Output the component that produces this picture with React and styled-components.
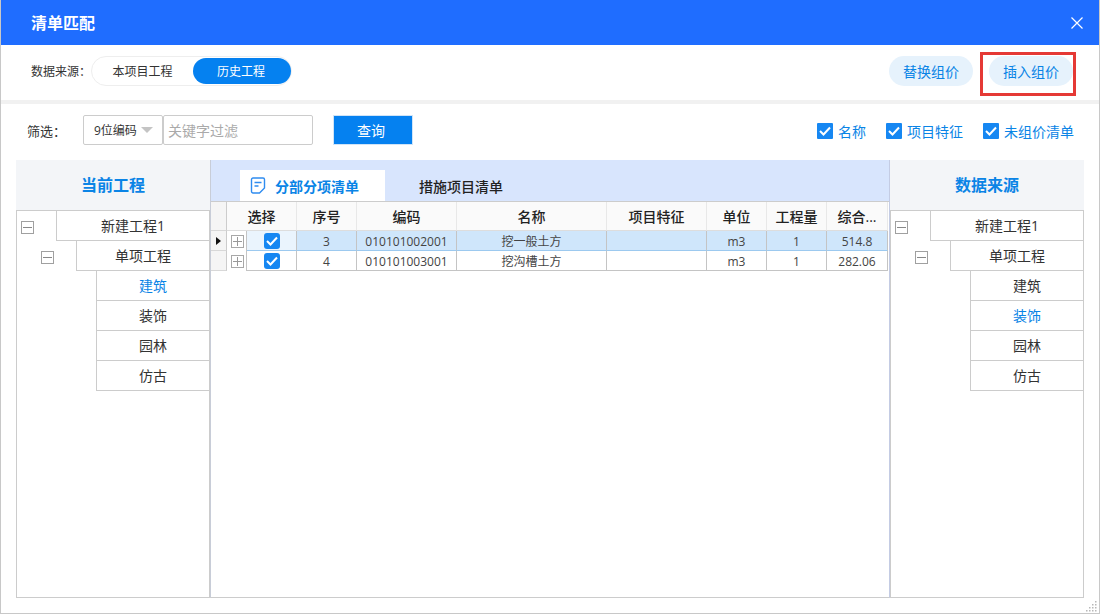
import React from "react";
import styled, { createGlobalStyle } from "styled-components";

const GlobalStyle = createGlobalStyle`
  html, body {
    margin: 0;
    padding: 0;
    background: #fff;
  }
  * {
    box-sizing: border-box;
  }
`;

const Dialog = styled.div`
  position: relative;
  display: flex;
  flex-direction: column;
  width: 1100px;
  height: 614px;
  overflow: hidden;
  background: #fff;
  border: 1px solid #c8c8c8;
  border-top: none;
  font-family: "Open Sans", "Noto Sans CJK SC", "Liberation Sans", sans-serif;
  font-size: 12px;
  color: #333;
`;

const TitleBar = styled.div`
  display: flex;
  align-items: center;
  justify-content: space-between;
  flex: none;
  height: 45px;
  margin: 0 -1px;
  padding: 0 17px 0 31px;
  background: #1f6dff;
  color: #fff;
`;

const Title = styled.h1`
  margin: 0;
  font-size: 16px;
  font-weight: 700;
  line-height: 22px;
`;

const CloseIcon = styled.svg`
  display: block;
  width: 12px;
  height: 12px;
`;

const Toolbar = styled.div`
  display: flex;
  align-items: center;
  justify-content: space-between;
  flex: none;
  height: 59px;
  padding: 0 26px 3px 30px;
  border-bottom: 4px solid #f1f1f1;
`;

const SourceGroup = styled.div`
  display: flex;
  align-items: center;
`;

const SourceLabel = styled.span`
  width: 60px;
  font-size: 12px;
`;

const Toggle = styled.div`
  display: flex;
  align-items: center;
  width: 201px;
  height: 30px;
  padding: 2px 0;
  border: 1px solid #eeeeee;
  border-radius: 15px;
`;

const ToggleOption = styled.div`
  display: flex;
  align-items: center;
  justify-content: center;
  width: ${(p) => (p.$active ? "98px" : "101px")};
  height: 26px;
  padding-right: ${(p) => (p.$active ? "2px" : "0")};
  border-radius: 13px;
  font-size: 12px;
  background: ${(p) => (p.$active ? "#0581f0" : "transparent")};
  color: ${(p) => (p.$active ? "#fff" : "#333")};
`;

const ActionGroup = styled.div`
  display: flex;
  gap: 16px;
`;

const ActionButton = styled.div`
  display: flex;
  align-items: center;
  justify-content: center;
  width: 84px;
  height: 30px;
  border-radius: 15px;
  background: #e6f2fc;
  color: #0a84e6;
  font-size: 14px;
`;

const Annotation = styled.div`
  position: absolute;
  left: 979px;
  top: 52px;
  width: 96px;
  height: 44px;
  border: 3px solid #e53935;
`;

const FilterBar = styled.div`
  display: flex;
  align-items: center;
  flex: none;
  height: 56px;
  padding: 0 25px 4px 26px;
`;

const FilterLabel = styled.span`
  width: 56px;
  font-size: 13px;
`;

const Select = styled.div`
  display: flex;
  align-items: center;
  width: 80px;
  height: 30px;
  padding-left: 10px;
  border: 1px solid #cccccc;
  border-radius: 2px;
  font-size: 12px;
`;

const Caret = styled.span`
  width: 0;
  height: 0;
  margin-left: 4px;
  border-left: 6px solid transparent;
  border-right: 6px solid transparent;
  border-top: 6px solid #c4c4c4;
`;

const KeywordInput = styled.input`
  width: 150px;
  height: 30px;
  padding: 0 4px;
  border: 1px solid #cccccc;
  border-radius: 2px;
  outline: none;
  font-family: inherit;
  font-size: 14px;
  &::placeholder {
    color: #aaaaaa;
  }
`;

const QueryButton = styled.button`
  width: 80px;
  height: 30px;
  margin-left: 20px;
  padding: 0 4px 0 0;
  border: 1px solid #d0e4f7;
  background: #0581f0;
  color: #fff;
  font-family: inherit;
  font-size: 14px;
`;

const CheckGroup = styled.div`
  display: flex;
  gap: 20px;
  margin-left: auto;
  margin-top: 2px;
`;

const CheckLabel = styled.label`
  display: flex;
  align-items: center;
  gap: 5px;
  color: #0a84e6;
  font-size: 14px;
`;

const CheckBox = styled.span`
  display: flex;
  align-items: center;
  justify-content: center;
  flex: none;
  width: 16px;
  height: 16px;
  border-radius: ${(p) => (p.$round ? "3px" : "1px")};
  background: #1687f2;
`;

const Main = styled.div`
  display: flex;
  flex: 1;
  min-height: 0;
  margin: 0 15px 15px;
`;

const SidePanel = styled.section`
  display: flex;
  flex-direction: column;
  width: 194px;
  flex: none;
`;

const SideHeader = styled.h2`
  display: flex;
  align-items: center;
  justify-content: center;
  flex: none;
  height: 50px;
  margin: 0;
  padding-bottom: 2px;
  background: #f3f5f8;
  color: #0a84e6;
  font-size: 16px;
  font-weight: 700;
`;

const Tree = styled.div`
  flex: 1;
  border: 1px solid #cccccc;
`;

const TreeRow = styled.div`
  display: flex;
  align-items: center;
  height: 30px;
`;

const Expander = styled.span`
  display: flex;
  align-items: center;
  justify-content: center;
  flex: none;
  width: 13px;
  height: 13px;
  margin: 2px 22px 0 ${(p) => p.$indent}px;
  border: 1px solid #a0a0a0;
`;

const TreeCell = styled.div`
  display: flex;
  align-items: center;
  justify-content: center;
  flex: 1;
  height: 30px;
  margin-left: ${(p) => p.$indent || 0}px;
  padding-bottom: 2px;
  border-left: 1px solid #cccccc;
  border-bottom: 1px solid #cccccc;
  color: ${(p) => (p.$active ? "#0a84e6" : "#333")};
  font-size: 14px;
`;

const Center = styled.section`
  display: flex;
  flex-direction: column;
  flex: 1;
  min-width: 0;
  border-left: 1px solid #c8cdd8;
  border-right: 1px solid #c4cce4;
  border-bottom: 1px solid #cccccc;
`;

const TabBar = styled.div`
  display: flex;
  align-items: flex-end;
  flex: none;
  height: 41px;
  padding-left: 29px;
  background: #d8e5fd;
`;

const Tab = styled.div`
  display: flex;
  align-items: center;
  gap: 9px;
  width: 145px;
  height: 31px;
  padding-left: 10px;
  background: #fff;
  color: #0a84e6;
  font-size: 14px;
  font-weight: 700;
`;

const PlainTab = styled.div`
  display: flex;
  align-items: center;
  height: 31px;
  margin-left: 34px;
  color: #222;
  font-size: 14px;
  font-weight: 500;
`;

const GridRow = styled.div`
  display: grid;
  grid-template-columns: 16px 20px 50px 60px 100px 150px 100px 60px 60px 61px;
  height: ${(p) => (p.$head ? "30px" : "20px")};
  border-top: ${(p) => (p.$head ? "1px solid #cccccc" : "none")};
`;

const HeadCell = styled.div`
  grid-column: ${(p) => (p.$wide ? "span 2" : "auto")};
  display: flex;
  align-items: center;
  justify-content: center;
  border-right: 1px solid #e8e8e8;
  border-bottom: 1px solid #dddddd;
  background: #fafafa;
  color: #222;
  font-size: 14px;
  font-weight: 500;
`;

const RowHead = styled.div`
  display: flex;
  align-items: center;
  justify-content: center;
  border-right: 1px solid #cccccc;
  border-bottom: 1px solid #d8d8d8;
  background: #f5f5f5;
`;

const ExpandCell = styled.div`
  display: flex;
  align-items: center;
  justify-content: center;
  padding-left: 1px;
  border-right: 1px solid #c4c4c4;
`;

const Cell = styled.div`
  display: flex;
  align-items: center;
  justify-content: center;
  padding-top: ${(p) => (p.$check ? "0" : "1px")};
  border-right: 1px solid #c4c4c4;
  border-bottom: 1px solid ${(p) => (p.$selected ? "#9cc9ef" : "#c4c4c4")};
  background: ${(p) => (p.$selected ? (p.$check ? "#eaf4fd" : "#cfe6fb") : "#fff")};
  color: #444;
  font-size: 12px;
`;

const SmallExpander = styled.span`
  display: flex;
  align-items: center;
  justify-content: center;
  width: 13px;
  height: 13px;
  border: 1px solid #a8a8a8;
`;

const Grip = styled.svg`
  position: absolute;
  right: 1px;
  bottom: 1px;
  width: 12px;
  height: 12px;
`;

const columns = ["序号", "编码", "名称", "项目特征", "单位", "工程量", "综合..."];

const rows = [
  { id: 3, code: "010101002001", name: "挖一般土方", unit: "m3", qty: "1", price: "514.8", selected: true },
  { id: 4, code: "010101003001", name: "挖沟槽土方", unit: "m3", qty: "1", price: "282.06" },
];

const Tick = () => (
  <svg width="12" height="10" viewBox="0 0 12 10" fill="none">
    <path d="M1 5l3.5 3.5L11 1.5" stroke="#fff" strokeWidth="2" />
  </svg>
);

const Minus = () => (
  <svg width="9" height="9" viewBox="0 0 9 9">
    <path d="M0 4.5h9" stroke="#888" strokeWidth="1" />
  </svg>
);

const Plus = () => (
  <svg width="9" height="9" viewBox="0 0 9 9">
    <path d="M0 4.5h9M4.5 0v9" stroke="#999" strokeWidth="1" />
  </svg>
);

const ProjectTree = ({ activeLeaf }) => (
  <Tree>
    <TreeRow>
      <Expander $indent={4}>
        <Minus />
      </Expander>
      <TreeCell>新建工程1</TreeCell>
    </TreeRow>
    <TreeRow>
      <Expander $indent={24}>
        <Minus />
      </Expander>
      <TreeCell>单项工程</TreeCell>
    </TreeRow>
    {["建筑", "装饰", "园林", "仿古"].map((leaf) => (
      <TreeRow key={leaf}>
        <TreeCell $indent={79} $active={leaf === activeLeaf}>
          {leaf}
        </TreeCell>
      </TreeRow>
    ))}
  </Tree>
);

const App = () => {
  return (
    <Dialog>
      <GlobalStyle />
      <TitleBar>
        <Title>清单匹配</Title>
        <CloseIcon viewBox="0 0 12 12" fill="none">
          <path d="M.5.5l11 11M11.5.5l-11 11" stroke="#fff" strokeWidth="1.2" />
        </CloseIcon>
      </TitleBar>

      <Toolbar>
        <SourceGroup>
          <SourceLabel>数据来源：</SourceLabel>
          <Toggle>
            <ToggleOption>本项目工程</ToggleOption>
            <ToggleOption $active>历史工程</ToggleOption>
          </Toggle>
        </SourceGroup>
        <ActionGroup>
          <ActionButton>替换组价</ActionButton>
          <ActionButton>插入组价</ActionButton>
        </ActionGroup>
      </Toolbar>
      <Annotation />

      <FilterBar>
        <FilterLabel>筛选：</FilterLabel>
        <Select>
          9位编码
          <Caret />
        </Select>
        <KeywordInput placeholder="关键字过滤" />
        <QueryButton>查询</QueryButton>
        <CheckGroup>
          {["名称", "项目特征", "未组价清单"].map((label) => (
            <CheckLabel key={label}>
              <CheckBox>
                <Tick />
              </CheckBox>
              {label}
            </CheckLabel>
          ))}
        </CheckGroup>
      </FilterBar>

      <Main>
        <SidePanel>
          <SideHeader>当前工程</SideHeader>
          <ProjectTree activeLeaf="建筑" />
        </SidePanel>

        <Center>
          <TabBar>
            <Tab>
              <svg width="16" height="17" viewBox="0 0 16 17" fill="none" stroke="#2f8cf0" strokeWidth="1.4">
                <path d="M3 1h10a1.5 1.5 0 0 1 1.5 1.5v8.5l-5 5H3A1.5 1.5 0 0 1 1.5 14.5v-12A1.5 1.5 0 0 1 3 1z" />
                <path d="M4.5 5.5h7M4.5 9h4" />
              </svg>
              分部分项清单
            </Tab>
            <PlainTab>措施项目清单</PlainTab>
          </TabBar>
          <GridRow $head>
            <RowHead />
            <HeadCell $wide>选择</HeadCell>
            {columns.map((col) => (
              <HeadCell key={col}>{col}</HeadCell>
            ))}
          </GridRow>
          {rows.map((row) => (
            <GridRow key={row.id}>
              <RowHead>
                {row.selected && (
                  <svg width="5" height="8" viewBox="0 0 5 8">
                    <path d="M0 0l5 4-5 4z" fill="#111" />
                  </svg>
                )}
              </RowHead>
              <ExpandCell>
                <SmallExpander>
                  <Plus />
                </SmallExpander>
              </ExpandCell>
              <Cell $selected={row.selected} $check>
                <CheckBox $round>
                  <Tick />
                </CheckBox>
              </Cell>
              <Cell $selected={row.selected}>{row.id}</Cell>
              <Cell $selected={row.selected}>{row.code}</Cell>
              <Cell $selected={row.selected}>{row.name}</Cell>
              <Cell $selected={row.selected} />
              <Cell $selected={row.selected}>{row.unit}</Cell>
              <Cell $selected={row.selected}>{row.qty}</Cell>
              <Cell $selected={row.selected}>{row.price}</Cell>
            </GridRow>
          ))}
        </Center>

        <SidePanel>
          <SideHeader>数据来源</SideHeader>
          <ProjectTree activeLeaf="装饰" />
        </SidePanel>
      </Main>

      <Grip viewBox="0 0 12 12" fill="#b8b8b8">
        <rect x="9" y="1" width="1.5" height="1.5" />
        <rect x="6" y="4" width="1.5" height="1.5" />
        <rect x="9" y="4" width="1.5" height="1.5" />
        <rect x="3" y="7" width="1.5" height="1.5" />
        <rect x="6" y="7" width="1.5" height="1.5" />
        <rect x="9" y="7" width="1.5" height="1.5" />
        <rect x="0" y="10" width="1.5" height="1.5" />
        <rect x="3" y="10" width="1.5" height="1.5" />
        <rect x="6" y="10" width="1.5" height="1.5" />
        <rect x="9" y="10" width="1.5" height="1.5" />
      </Grip>
    </Dialog>
  );
};

export default App;
